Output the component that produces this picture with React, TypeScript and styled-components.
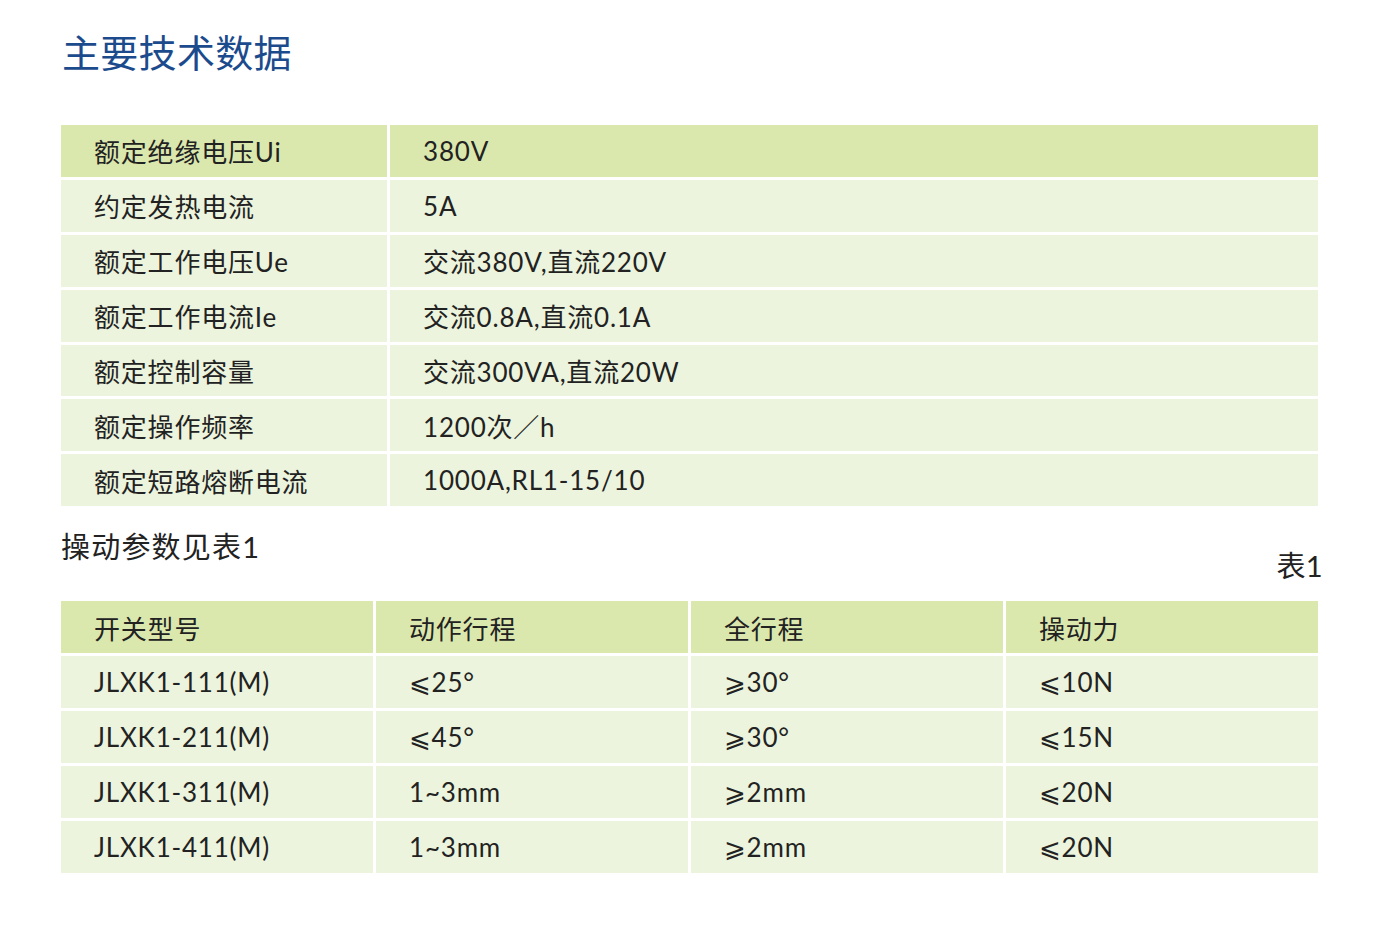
import React from "react";
import styled, { createGlobalStyle } from "styled-components";

const Global = createGlobalStyle`
  html, body { margin: 0; padding: 0; background: #ffffff; }
  body { font-family: "Lato", "Noto Sans CJK SC", "DejaVu Sans", sans-serif; color: #222; }
`;

const Page = styled.div`
  width: 1382px;
  height: 935px;
  box-sizing: border-box;
  padding: 28px 62px 0 61px;
  display: flex;
  flex-direction: column;
`;

const Title = styled.h1`
  margin: 0 0 0 1px;
  font-family: "Noto Sans CJK SC", sans-serif;
  font-weight: 400;
  font-size: 38px;
  line-height: 46px;
  letter-spacing: 0.3px;
  color: #1b4b8c;
`;

const Table = styled.div<{ $cols: string; $top: number }>`
  margin-top: ${(p) => p.$top}px;
  margin-right: 2px;
  display: grid;
  grid-template-columns: ${(p) => p.$cols};
  grid-auto-rows: 51.9px;
  gap: 3px 3px;
`;

const Cell = styled.div<{ $head?: boolean }>`
  background: ${(p) => (p.$head ? "#dbe8ad" : "#ecf4dd")};
  display: flex;
  align-items: center;
  padding-left: 33px;
  font-size: 26px;
  letter-spacing: 0.8px;
  color: #222;
  white-space: nowrap;
`;

const CaptionRow = styled.div`
  margin-top: 22px;
  display: flex;
  justify-content: space-between;
  align-items: flex-start;
`;

const Caption = styled.div<{ $offset?: number }>`
  margin-top: ${(p) => p.$offset ?? 0}px;
  font-size: 29px;
  line-height: 38px;
  letter-spacing: 1.2px;
  color: #222;
`;

const Tail = styled(Caption)`
  letter-spacing: 0.4px;
  margin-right: -3px;
`;

const specs: [string, string][] = [
  ["额定绝缘电压Ui", "380V"],
  ["约定发热电流", "5A"],
  ["额定工作电压Ue", "交流380V,直流220V"],
  ["额定工作电流Ie", "交流0.8A,直流0.1A"],
  ["额定控制容量", "交流300VA,直流20W"],
  ["额定操作频率", "1200次／h"],
  ["额定短路熔断电流", "1000A,RL1-15/10"],
];

const ops: string[][] = [
  ["开关型号", "动作行程", "全行程", "操动力"],
  ["JLXK1-111(M)", "⩽25°", "⩾30°", "⩽10N"],
  ["JLXK1-211(M)", "⩽45°", "⩾30°", "⩽15N"],
  ["JLXK1-311(M)", "1~3mm", "⩾2mm", "⩽20N"],
  ["JLXK1-411(M)", "1~3mm", "⩾2mm", "⩽20N"],
];

export default function App() {
  return (
    <>
      <Global />
      <Page>
        <Title>主要技术数据</Title>
        <Table $cols="326px 1fr" $top={51}>
          {specs.map(([k, v], i) => (
            <React.Fragment key={k}>
              <Cell $head={i === 0}>{k}</Cell>
              <Cell $head={i === 0}>{v}</Cell>
            </React.Fragment>
          ))}
        </Table>
        <CaptionRow>
          <Caption>操动参数见表1</Caption>
          <Tail $offset={19}>表1</Tail>
        </CaptionRow>
        <Table $cols="repeat(4, 1fr)" $top={16}>
          {ops.map((row, r) =>
            row.map((c, ci) => (
              <Cell key={`${r}-${ci}`} $head={r === 0}>
                {c}
              </Cell>
            ))
          )}
        </Table>
      </Page>
    </>
  );
}
